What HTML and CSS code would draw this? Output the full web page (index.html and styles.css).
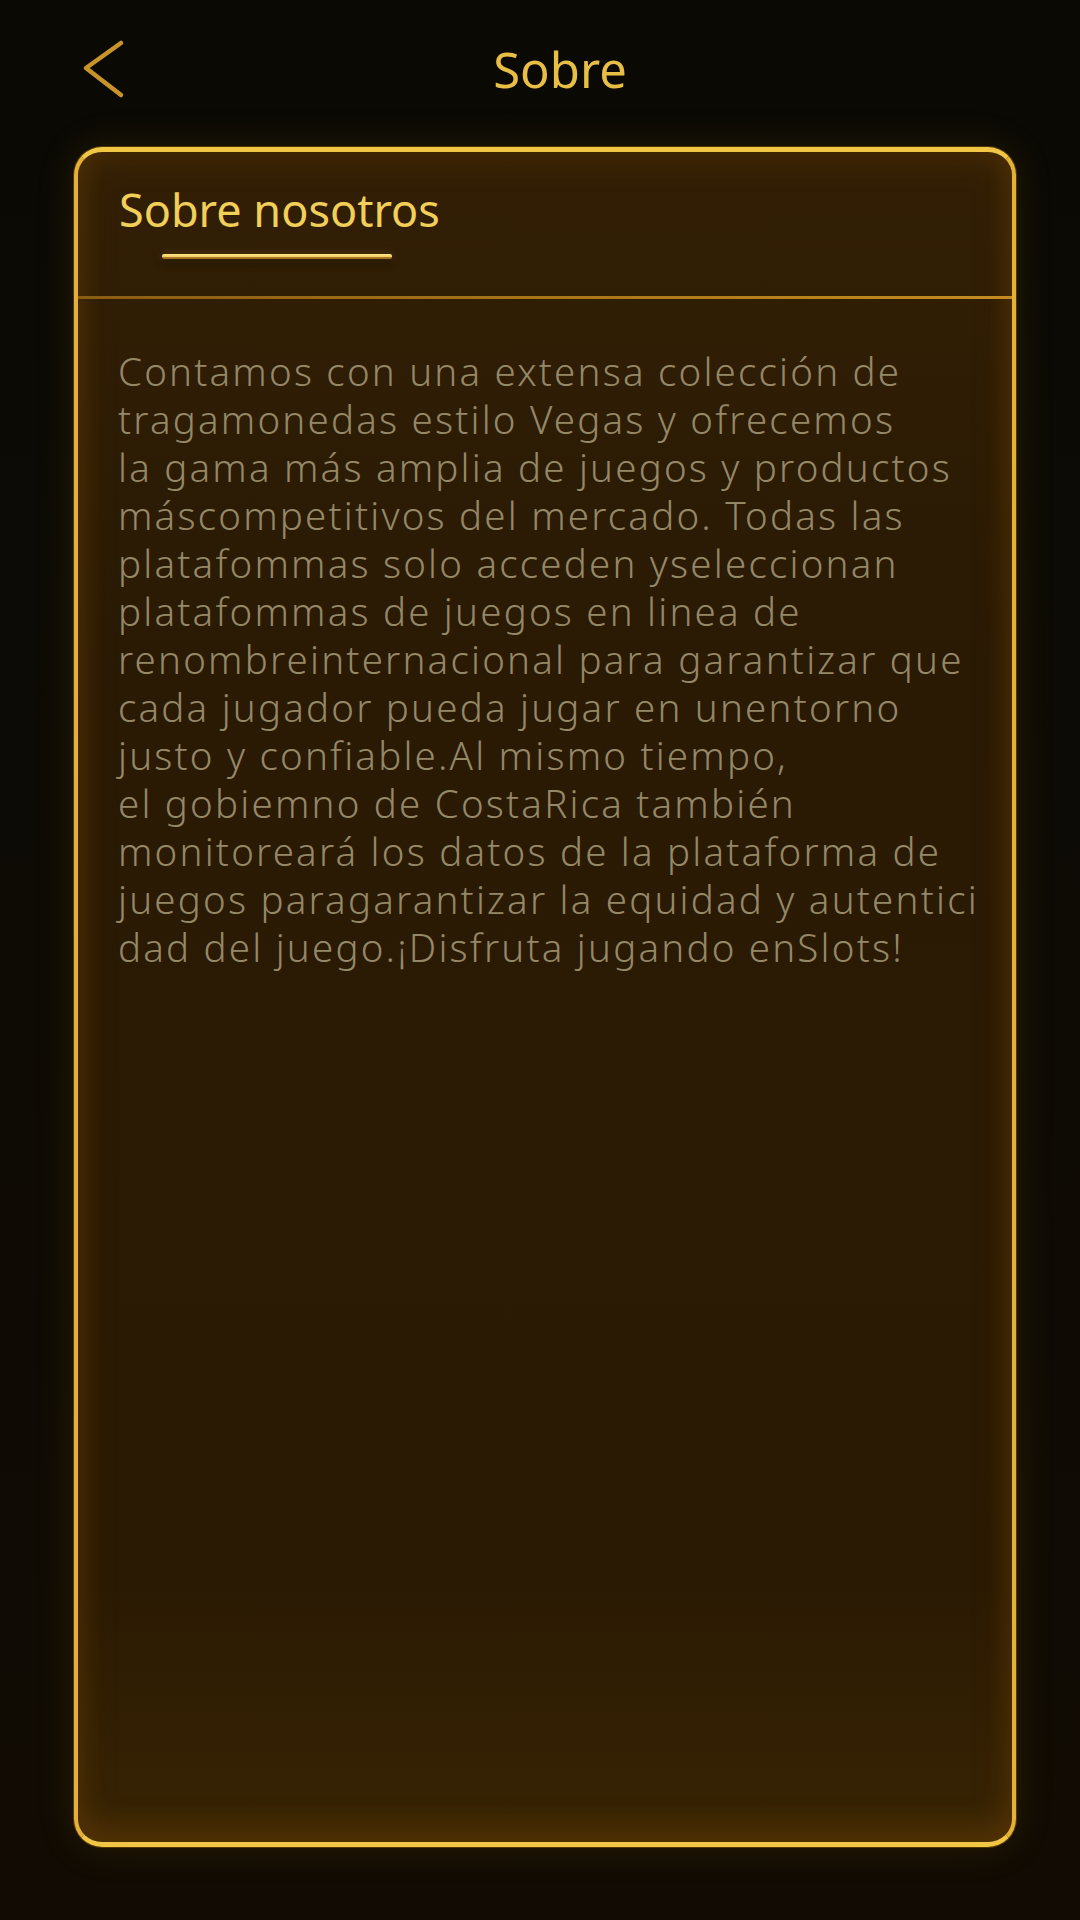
FILE: index.html
```html
<!DOCTYPE html>
<html lang="es">
<head>
<meta charset="utf-8">
<title>Sobre</title>
<link rel="stylesheet" href="styles.css">
</head>
<body>
<div class="page">
  <header class="header">
    <button class="back" aria-label="Volver">
      <svg width="50" height="64" viewBox="0 0 50 64">
        <polyline points="41,5 6,30 41,57" fill="none" stroke="#c8942a" stroke-width="4.5" stroke-linecap="round" stroke-linejoin="round"/>
      </svg>
    </button>
    <h1 class="title">Sobre</h1>
  </header>
  <section class="card">
    <div class="tabs">
      <div class="tab">
        <span class="tab-label">Sobre nosotros</span>
        <span class="tab-line"></span>
      </div>
    </div>
    <div class="divider"></div>
    <div class="content">
      <p class="text"><span>Contamos con una extensa colección de</span>
<span>tragamonedas estilo Vegas y ofrecemos</span>
<span>la gama más amplia de juegos y productos</span>
<span>máscompetitivos del mercado. Todas las</span>
<span>platafommas solo acceden yseleccionan</span>
<span>platafommas de juegos en linea de</span>
<span>renombreinternacional para garantizar que</span>
<span>cada jugador pueda jugar en unentorno</span>
<span>justo y confiable.Al mismo tiempo,</span>
<span>el gobiemno de CostaRica también</span>
<span>monitoreará los datos de la plataforma de</span>
<span>juegos paragarantizar la equidad y autentici</span>
<span>dad del juego.¡Disfruta jugando enSlots!</span></p>
    </div>
  </section>
</div>
</body>
</html>
```
FILE: styles.css
```css
* { box-sizing: border-box; }
html, body { margin: 0; padding: 0; }
body {
  width: 1080px;
  height: 1920px;
  overflow: hidden;
  background: linear-gradient(180deg, #0a0904 0%, #0d0b05 40%, #110b03 100%);
  font-family: "Noto Sans", "Open Sans", sans-serif;
}
.page {
  display: flex;
  flex-direction: column;
  height: 1920px;
}
.header {
  height: 138px;
  display: flex;
  align-items: center;
  padding-left: 80px;
  padding-right: 90px;
}
.back {
  width: 50px;
  height: 64px;
  padding: 0;
  margin: 0;
  border: 0;
  background: none;
  display: flex;
  align-items: center;
  justify-content: center;
  margin-top: 2px;
}
.title {
  flex: 1;
  margin: 0;
  text-align: center;
  font-weight: 400;
  font-size: 49px;
  line-height: 60px;
  color: #e8be45;
}
.card {
  margin-top: 9px;
  margin-left: 74px;
  width: 942px;
  height: 1700px;
  border: 4px solid #e2b136;
  border-top: 5px solid #f0c644;
  border-bottom: 5px solid #f0c644;
  border-radius: 28px;
  background: linear-gradient(180deg, #321f05 0%, #2a1a04 30%, #2b1a03 85%, #382404 100%);
  box-shadow:
    0 0 0 1px rgba(120, 80, 10, 0.6),
    0 0 40px rgba(190, 140, 30, 0.14),
    inset 0 0 34px rgba(86, 52, 7, 0.85),
    inset 0 -20px 26px rgba(110, 70, 8, 0.3);
  display: flex;
  flex-direction: column;
}
.tabs {
  padding: 28px 0 37px 41px;
}
.tab {
  display: inline-flex;
  flex-direction: column;
  align-items: flex-start;
}
.tab-label {
  font-size: 45px;
  line-height: 60px;
  color: #f1cf58;
}
.tab-line {
  display: block;
  margin-top: 14px;
  margin-left: 43px;
  width: 230px;
  height: 5px;
  border-radius: 2px;
  background: linear-gradient(180deg, #fde78e 0%, #f4d062 50%, #b4832c 51%, #9a6c22 100%);
  box-shadow: 0 4px 7px rgba(0, 0, 0, 0.55), 0 0 8px rgba(240, 190, 60, 0.25);
}
.divider {
  height: 3px;
  background: linear-gradient(90deg, #8a5c14 0%, #a87518 50%, #c48c20 100%);
}
.content {
  padding: 48px 0 0 40px;
}
.text {
  margin: 0;
  font-size: 38.5px;
  font-weight: 300;
  line-height: 48px;
  color: #958868;
  display: flex;
  flex-direction: column;
  white-space: nowrap;
  letter-spacing: 2.2px;
}
```
